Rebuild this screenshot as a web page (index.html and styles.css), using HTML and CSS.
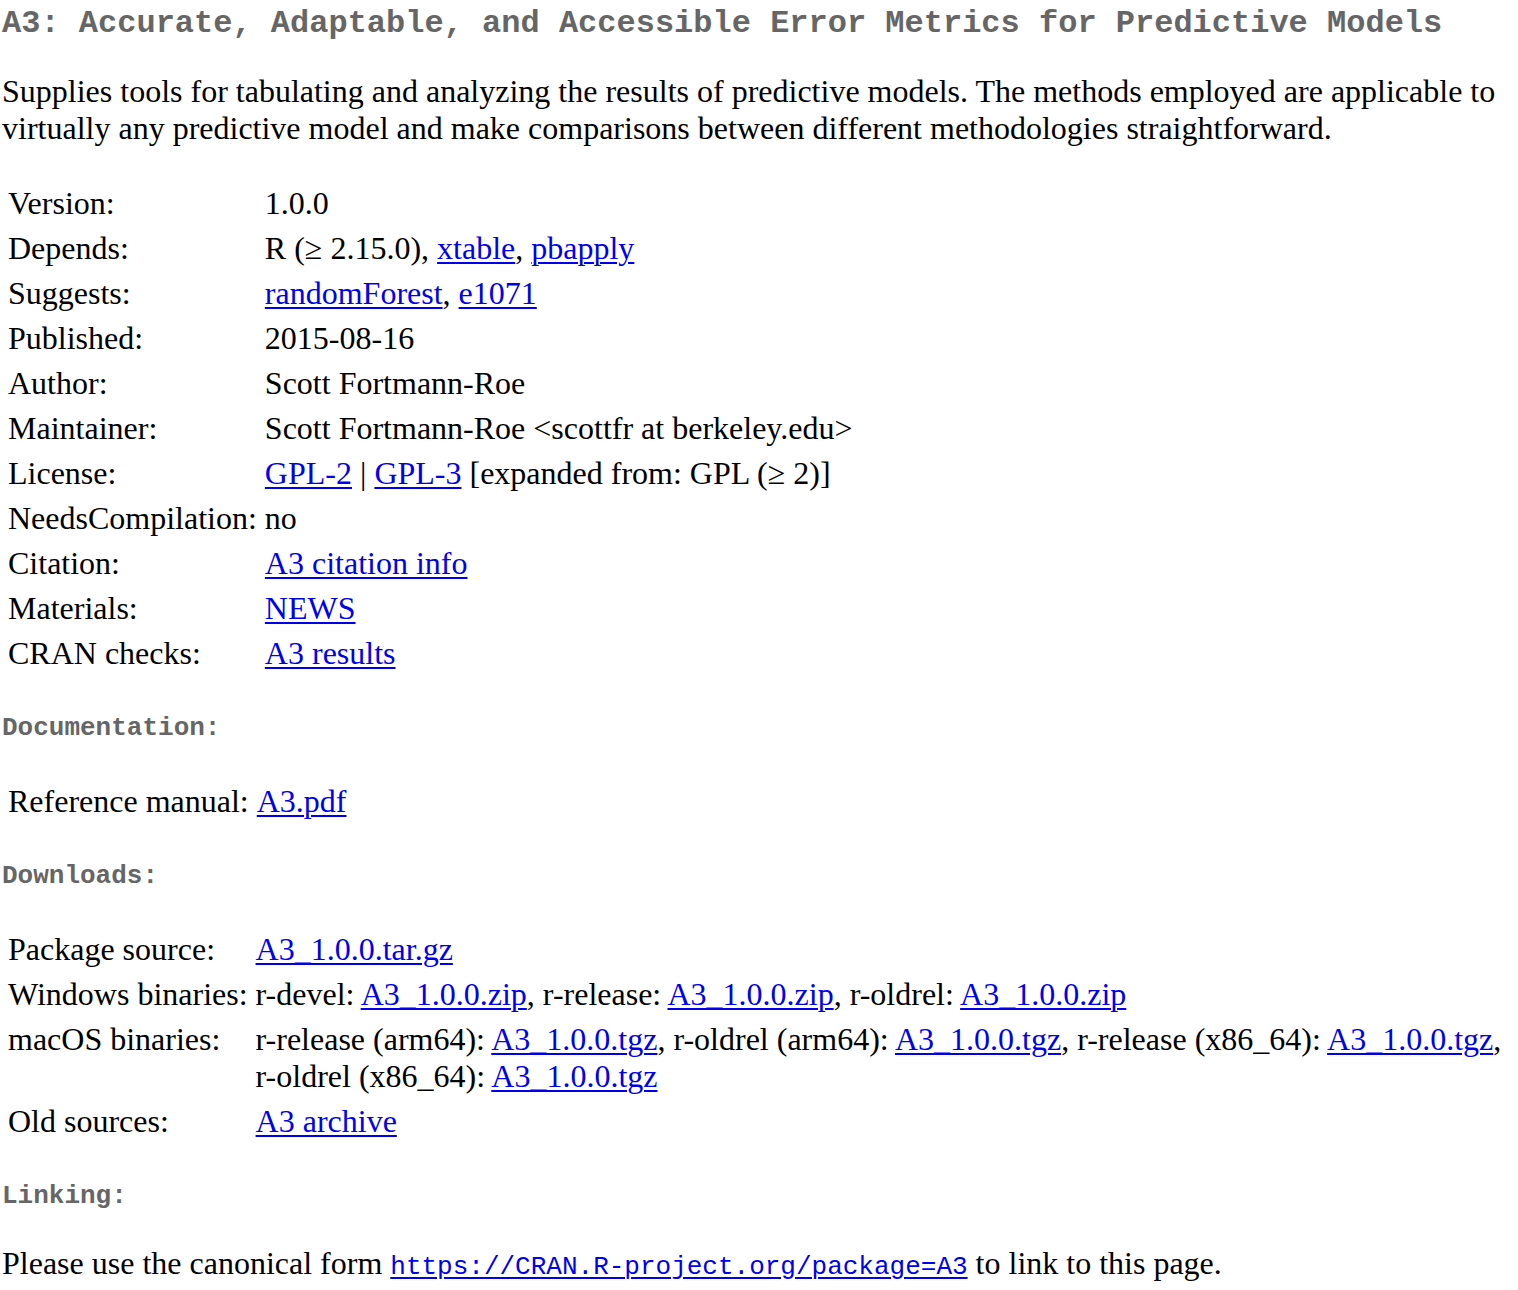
FILE: index.html
```html
<!DOCTYPE html>
<html lang="en">
<head>
<meta charset="utf-8">
<title>CRAN: Package A3</title>
<link rel="stylesheet" href="styles.css">
</head>
<body>
<div class="container">
<h2 class="title">A3: Accurate, Adaptable, and Accessible Error Metrics for Predictive Models</h2>
<p class="desc">Supplies tools for tabulating and analyzing the results of predictive models. The methods employed are applicable to virtually any predictive model and make comparisons between different methodologies straightforward.</p>
<table class="info">
<tr><td>Version:</td><td>1.0.0</td></tr>
<tr><td>Depends:</td><td>R (≥ 2.15.0), <a href="#">xtable</a>, <a href="#">pbapply</a></td></tr>
<tr><td>Suggests:</td><td><a href="#">randomForest</a>, <a href="#">e1071</a></td></tr>
<tr><td>Published:</td><td>2015-08-16</td></tr>
<tr><td>Author:</td><td>Scott Fortmann-Roe</td></tr>
<tr><td>Maintainer:</td><td>Scott Fortmann-Roe  &lt;scottfr at berkeley.edu&gt;</td></tr>
<tr><td>License:</td><td><a href="#">GPL-2</a> | <a href="#">GPL-3</a> [expanded from: GPL (≥ 2)]</td></tr>
<tr><td>NeedsCompilation:</td><td>no</td></tr>
<tr><td>Citation:</td><td><a href="#">A3 citation info</a> </td></tr>
<tr><td>Materials:</td><td><a href="#">NEWS</a> </td></tr>
<tr><td>CRAN&nbsp;checks:</td><td><a href="#">A3 results</a></td></tr>
</table>
<h4 class="section">Documentation:</h4>
<table class="info">
<tr><td>Reference&nbsp;manual:</td><td><a href="#">A3.pdf</a></td></tr>
</table>
<h4 class="section">Downloads:</h4>
<table class="info">
<tr><td>Package&nbsp;source: </td><td><a href="#">A3_1.0.0.tar.gz</a></td></tr>
<tr><td>Windows&nbsp;binaries: </td><td>r-devel: <a href="#">A3_1.0.0.zip</a>, r-release: <a href="#">A3_1.0.0.zip</a>, r-oldrel: <a href="#">A3_1.0.0.zip</a></td></tr>
<tr><td>macOS&nbsp;binaries: </td><td>r-release (arm64): <a href="#">A3_1.0.0.tgz</a>, r-oldrel (arm64): <a href="#">A3_1.0.0.tgz</a>, r-release (x86_64): <a href="#">A3_1.0.0.tgz</a>, r-oldrel (x86_64): <a href="#">A3_1.0.0.tgz</a></td></tr>
<tr><td>Old&nbsp;sources: </td><td> <a href="#">A3 archive</a> </td></tr>
</table>
<h4 class="section">Linking:</h4>
<p class="linking">Please use the canonical form <a href="#" class="code">https://CRAN.R-project.org/package=A3</a> to link to this page.</p>
</div>
</body>
</html>
```
FILE: styles.css
```css
html, body {
  margin: 0;
  padding: 0;
  background: #ffffff;
}
body {
  color: #000000;
  font-family: "Liberation Serif", "Times New Roman", serif;
  font-size: 32px;
  line-height: 37px;
}
.container {
  padding: 0 0 0 2px;
}
a {
  color: #0000ee;
  text-decoration: underline;
  text-decoration-thickness: 2px;
  text-underline-offset: 3px;
}
.title {
  font-family: "Liberation Mono", "Courier New", monospace;
  font-weight: bold;
  font-size: 32px;
  line-height: 36px;
  color: #666666;
  margin: 6px 0 31px 0;
}
.desc {
  margin: 0 16px 32px 0;
}
.info {
  border-spacing: 4px;
  border-collapse: separate;
  margin: 0;
}
.info td {
  padding: 2px;
  vertical-align: top;
  white-space: normal;
}
.info td:first-child {
  white-space: nowrap;
}
.section {
  font-family: "Liberation Mono", "Courier New", monospace;
  font-weight: bold;
  font-size: 26px;
  line-height: 30px;
  color: #666666;
  margin: 35px 0 34px 0;
}
.linking {
  margin: 34px 0 0 0;
}
.code {
  font-family: "Liberation Mono", "Courier New", monospace;
  font-size: 26px;
}
```
